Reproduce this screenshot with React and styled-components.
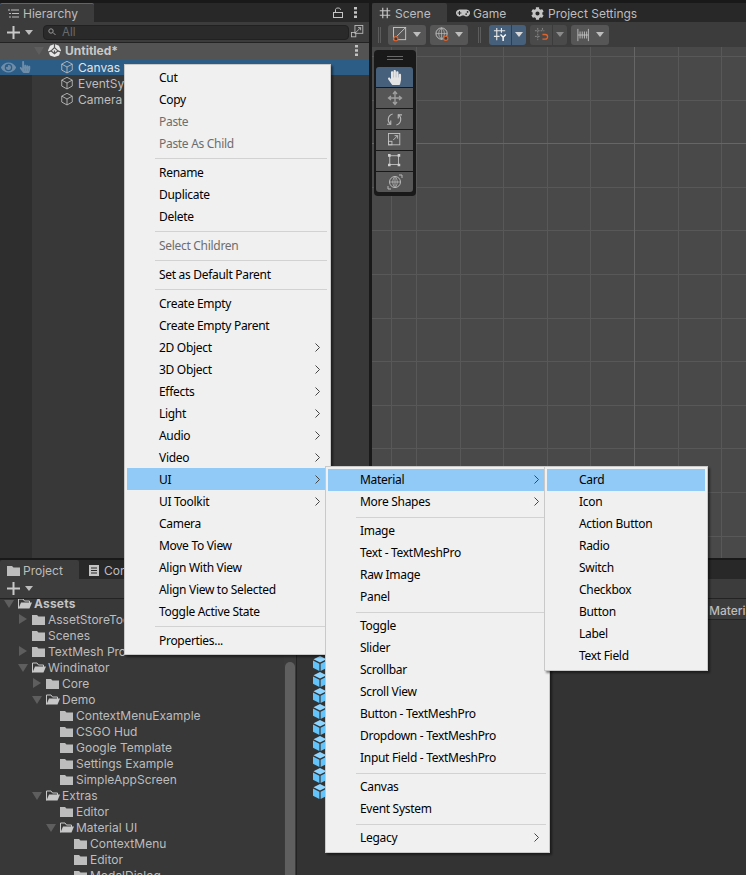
import React from "react";
import styled, { createGlobalStyle } from "styled-components";
import { FaCog, FaGamepad, FaHandPaper, FaHandPointer, FaEye } from "react-icons/fa";

const Global = createGlobalStyle`
  html, body { margin: 0; padding: 0; background: #191919; }
  * { box-sizing: border-box; }
  body { font-family: Inter, "Liberation Sans", sans-serif; font-size: 12px; }
`;

const Page = styled.div`
  position: relative; width: 746px; height: 875px; overflow: hidden;
  background: #191919; display: flex; flex-direction: column;
  color: #bdbdbd; font-family: Inter, "Liberation Sans", sans-serif; font-size: 12px;
`;
const Upper = styled.div`display: flex; height: 558px; padding-top: 3px; gap: 3px;`;
const Lower = styled.div`flex: 1; margin-top: 2px; display: flex; flex-direction: column; min-height: 0;`;
const Panel = styled.section`display: flex; flex-direction: column; min-width: 0; ${p => p.$w ? `width:${p.$w}px;` : "flex:1;"}`;
const TabBar = styled.div`display: flex; height: 19px; background: #282828; align-items: stretch; flex: none;`;
const Tab = styled.div`
  display: flex; align-items: center; gap: ${p => p.$gap ?? 5}px;
  width: ${p => p.$w}px; padding-left: ${p => p.$pl ?? 8}px; padding-top: 1px; flex: none; white-space: nowrap;
  background: ${p => p.$active ? "#3c3c3c" : "transparent"};
  border-top: ${p => p.$blue ? "1px solid #3d6d9e" : "none"};
  border-radius: 2px 2px 0 0;
`;
const TabTools = styled.div`margin-left: auto; display: flex; align-items: center; gap: 11px; padding-right: 12px;`;
const Toolbar = styled.div`
  height: ${p => p.$h}px; flex: none; display: flex; align-items: center; background: #3c3c3c;
  border-bottom: 1px solid #232323; padding-left: 7px;
`;
const PlusDrop = styled.div`display: flex; align-items: center; gap: 5px; width: 36px; flex: none;`;
const Search = styled.div`
  width: 306px; height: 15px; border-radius: 4px; background: #2a2a2a; border: 1px solid #212121;
  display: flex; align-items: center; gap: 5px; padding-left: 4px; color: #6a6a6a; font-size: 11.5px;
`;
const SearchBtn = styled.div`margin-left: 2px; width: 14px; height: 14px; display: flex;`;
const HierList = styled.div`
  flex: 1; background: linear-gradient(to right, #2e2e2e 32px, #383838 32px);
`;
const SceneHeader = styled.div`
  height: 16px; background: #535353; display: flex; align-items: center; padding: 0 0 1px 34px;
  gap: 4px; font-weight: 700; color: #c8c8c8;
`;
const HeaderDots = styled.div`margin-left: auto; margin-right: 11px; display: flex;`;
const HierRow = styled.div`
  height: 16px; display: flex; align-items: center; color: ${p => p.$sel ? "#e4e4e4" : "#bdbdbd"};
  background: ${p => p.$sel ? "#2c5d87" : "transparent"};
`;
const Gutter = styled.div`width: 60px; flex: none; display: flex; align-items: center; padding-left: 1px; gap: 3px;`;
const RowLabel = styled.span`margin-left: 4px;`;

const SceneBar = styled.div`height: 25px; flex: none; background: #3c3c3c; display: flex; align-items: center; padding-left: 6px; gap: 4px;`;
const Grip = styled.div`width: 3px; height: 16px; flex: none; border-left: 1px solid #5c5c5c; border-right: 1px solid #5c5c5c; margin-right: ${p => p.$mr ?? 6}px;`;
const ToolBtn = styled.div`
  height: 20px; width: ${p => p.$w}px; flex: none; display: flex; align-items: center; justify-content: center;
  background: ${p => p.$on ? "#46607c" : p.$dim ? "#4a4a4a" : "#565656"};
  border-radius: ${p => p.$side === "l" ? "3px 0 0 3px" : p.$side === "r" ? "0 3px 3px 0" : "3px"};
  margin-right: ${p => p.$mr ?? 0}px; gap: 5px;
`;
const SceneView = styled.div`
  flex: 1; position: relative; background-color: #494949;
  background-image:
    linear-gradient(#666666, #666666), linear-gradient(#666666, #666666),
    repeating-linear-gradient(to right, #585858 0 1px, transparent 1px 43.6px),
    repeating-linear-gradient(to bottom, #585858 0 1px, transparent 1px 43.6px);
  background-size: 1px 100%, 100% 1px, 100% 100%, 100% 100%;
  background-position: 262px 0, 0 96px, 44px 0, 0 9px;
  background-repeat: no-repeat, no-repeat, repeat, repeat;
`;
const Palette = styled.div`
  position: absolute; left: 2px; top: 3px; width: 42px; height: 146px; background: #191919; border-radius: 4px;
  padding: 6px 2px 0 2px; display: flex; flex-direction: column; gap: 1px;
`;
const PaletteGrip = styled.div`height: 4px; width: 16px; margin: 0 auto 6px; border-top: 1px solid #6a6a6a; border-bottom: 1px solid #6a6a6a; flex:none;`;
const PaletteBtn = styled.div`
  height: 20px; flex: none; width: 37px; display: flex; align-items: center; justify-content: center;
  background: ${p => p.$on ? "#46607c" : "#565656"};
  border-radius: ${p => p.$on ? "3px 3px 0 0" : p.$last ? "0 0 3px 3px" : "0"};
`;

const ProjectTabs = styled(TabBar)`height: 19px;`;
const LowerBody = styled.div`flex: 1; display: flex; min-height: 0;`;
const Tree = styled.div`width: 296px; flex: none; background: #383838; display: flex; overflow: hidden;`;
const TreeList = styled.div`flex: 1; min-width: 0; margin-top: -4px;`;
const TreeRow = styled.div`
  height: 16px; display: flex; align-items: center; padding-left: ${p => 3 + p.$level * 14}px;
  font-weight: ${p => p.$bold ? 700 : 400}; color: ${p => p.$bold ? "#c4c4c4" : "#bdbdbd"}; white-space: nowrap;
  letter-spacing: ${p => p.$bold ? "0.2px" : "0"};
`;
const Arrow = styled.span`width: 15px; flex: none; display: flex; padding-left: 1px;`;
const FolderBox = styled.span`width: 16px; flex: none; display: flex;`;
const ScrollTrack = styled.div`width: 12px; flex: none; padding: 63px 1px 0; background: #3a3a3a;`;
const ScrollThumb = styled.div`height: 400px; background: #5f5f5f; border-radius: 5px;`;
const Assets = styled.div`flex: 1; background: #333333; border-left: 1px solid #232323; min-width: 0;`;
const Breadcrumb = styled.div`
  height: 21px; background: #3c3c3c; border-bottom: 1px solid #232323; display: flex; align-items: center;
  padding: 2px 0 0 412px; white-space: nowrap; overflow: hidden; font-weight: 500;
`;
const CubeColumn = styled.div`padding: 36px 0 0 16px; display: flex; flex-direction: column;`;
const CubeCell = styled.div`height: 16px; display: flex;`;

const Menu = styled.div`
  position: absolute; left: ${p => p.$x}px; top: ${p => p.$y}px; width: ${p => p.$w}px;
  background: #f0f0f0; border: 1px solid #c9c9c9; padding: ${p => p.$pad ?? 1}px 2px 3px;
  box-shadow: 2px 2px 2px rgba(0,0,0,.45);
  color: #000; font-family: "Noto Sans", "Liberation Sans", sans-serif; font-size: 12px;
`;
const Item = styled.div`
  height: 22px; display: flex; align-items: center; padding: 0 8px ${p => p.$lift ? 2 : 0}px 32px;
  white-space: nowrap; letter-spacing: -0.3px; justify-content: space-between;
  color: ${p => p.$off ? "#6d6d6d" : "#000"};
  background: ${p => p.$hot ? "#91c9f7" : "transparent"};
`;
const Sep = styled.div`height: 7px; display: flex; align-items: center; padding: 1px 1px 0 28px; &::after { content: ""; flex: 1; height: 1px; background: #d2d2d2; }`;

const Svg = ({ s = 16, h, vb = "0 0 16 16", children, ...r }) => <svg width={s} height={h ?? s} viewBox={vb} fill="none" style={{ flex: "none", display: "block" }} {...r}>{children}</svg>;

const Cube = () => <Svg s={14} stroke="#bdbdbd" strokeWidth="1"><path d="M8 1.5 14 4.7v6.8L8 14.8 2 11.5V4.7zM2 4.7 8 8l6-3.3M8 8v6.8" /></Svg>;
const BlueCube = () => <Svg s={14} h={15} vb="0 0 14 15"><path d="M7 0 13.5 3.3 7 6.6 .5 3.3z" fill="#8ed6ff" /><path d="M0 4.4 6.4 7.7V15L0 11.7z" fill="#63c4fb" /><path d="M14 4.4 7.6 7.7V15L14 11.7z" fill="#63c4fb" /></Svg>;
const Plus = () => <Svg s={13} vb="0 0 13 13"><path d="M6.5 0v13M0 6.5h13" stroke="#c8c8c8" strokeWidth="2" /></Svg>;
const Caret = ({ c = "#bdbdbd", w = 8 }) => <Svg s={w} h={5} vb="0 0 8 5"><path d="M0 0h8L4 5z" fill={c} /></Svg>;
const TriDown = () => <Svg s={10} h={9} vb="0 0 10 9"><path d="M0 1h10L5 9z" fill="#5e5e5e" /></Svg>;
const TriRight = () => <Svg s={9} h={10} vb="0 0 9 10"><path d="M1 0l8 5-8 5z" fill="#5e5e5e" /></Svg>;
const Folder = () => <Svg s={13} h={11} vb="0 0 13 11"><path d="M0 1h5l1.5 1.5H13V11H0z" fill="#bdbdbd" /></Svg>;
const OpenFolder = () => <Svg s={14} h={11} vb="0 0 14 11"><path d="M.5 10.5V1h4.5l1.5 2h5v2" stroke="#c8c8c8" fill="none" /><path d="M.5 10.5 3 4.5h11l-2.5 6z" fill="#c8c8c8" /></Svg>;
const Dots = ({ c = "#c4c4c4" }) => <Svg s={3} h={11} vb="0 0 3 11"><path d="M0 0h3v2.4H0zM0 4.3h3v2.4H0zM0 8.6h3V11H0z" fill={c} /></Svg>;
const ListIcon = () => <Svg s={11} h={9} vb="0 0 11 9"><path d="M3 1h8M4 4.5h7M4 8h7" stroke="#bdbdbd" /><path d="M0 .5h2v1H0zM1 4h2v1H1zM1 7.5h2v1H1z" fill="#bdbdbd" /></Svg>;
const Lock = () => <Svg s={10} h={11} vb="0 0 10 11"><rect x=".5" y="5.5" width="9" height="5" stroke="#c4c4c4" /><path d="M2.5 5.5V2.5C2.5 .5 7.5 .5 7.5 2.5V3" stroke="#c4c4c4" /></Svg>;
const Unity = () => <Svg s={13} vb="0 0 16 16"><path d="M8 0 13.5 2 16 8 13.5 14 8 16 2.500 14 0 8 2.500 2z" fill="#e6e6e6" /><path d="M8 0v4.500M0 10l3.800-1.500M16 10l-3.800-1.500M8 4.500l4.200 4-4.200 3.500-4.200-3.500zM8 8v4" stroke="#535353" strokeWidth="1.5" /></Svg>;
const SearchIcon = () => <Svg s={9} h={8} vb="0 0 9 8"><circle cx="3" cy="3" r="2.2" stroke="#9a9a9a" /><path d="M5 4.500 7.500 7" stroke="#9a9a9a" /></Svg>;
const ExpandIcon = () => <Svg s={14}><rect x="4.500" y=".5" width="9" height="9" stroke="#bdbdbd" /><rect x=".5" y="8.500" width="5" height="5" stroke="#bdbdbd" /><path d="M6 8 11 3M8 3h3v3" stroke="#bdbdbd" /></Svg>;
const GridIcon = ({ c = "#c4c4c4" }) => <Svg s={12}><path d="M5 1v14M11 1v14M1 5h14M1 11h14" stroke={c} strokeWidth="1.6" /></Svg>;
const DocIcon = () => <Svg s={10} h={11} vb="0 0 10 11"><path d="M0 0h10v11H0z" fill="#c4c4c4" /><path d="M2 3h6M2 5.500h6M2 8h6" stroke="#282828" /></Svg>;
const Chevron = () => <Svg s={5} h={9} vb="0 0 5 9"><path d="M.5.5 4.500 4.500.5 8.500" stroke="#444" /></Svg>;

const PivotIcon = () => <Svg s={15}><rect x=".5" y=".5" width="13" height="13" stroke="#c4c4c4" /><path d="M1 13 13 1" stroke="#c4c4c4" /><circle cx="3" cy="12.500" r="2.200" fill="#3c3c3c" stroke="#e0632c" strokeWidth="1.2" /></Svg>;
const GlobeIcon = () => <Svg s={15}><circle cx="7" cy="7" r="6" stroke="#c4c4c4" /><path d="M1 7h12M7 1v12M7 1C3 4 3 10 7 13M7 1c4 3 4 9 0 12" stroke="#c4c4c4" strokeWidth=".7" /><circle cx="11.500" cy="12" r="2.200" fill="#3c3c3c" stroke="#e0632c" strokeWidth="1.2" /></Svg>;
const GridYIcon = () => <Svg s={15}><path d="M4 1v13M9 1v5M1 4h12M1 10h6" stroke="#e6e6e6" strokeWidth="1.2" /><path d="M8 8l2.800 3 2.800-3M10.800 11v4" stroke="#fff" strokeWidth="1.5" /></Svg>;
const SnapIcon = () => <Svg s={15}><path d="M4 1v13M9 1v3M1 4h10M1 10h5" stroke="#8a8a8a" strokeDasharray="2 1" /><path d="M9 8h3a2.500 2.500 0 0 1 0 5H9" stroke="#e0632c" strokeWidth="1.4" /></Svg>;
const BarsIcon = () => <Svg s={14}><path d="M1 1v14M13 1v14M3.500 4v8M6 4v8M8.500 4v8M11 4v8M1 8h12" stroke="#c4c4c4" /></Svg>;

const MoveIcon = () => <Svg s={16} stroke="#a0a0a0" strokeWidth="1.3"><path d="M8 2v12M2 8h12M6 4l2-2.500L10 4M6 12l2 2.500 2-2.500M4 6 1.500 8 4 10M12 6l2.500 2L12 10" /></Svg>;
const RotateIcon = () => <Svg s={15} stroke="#b8b8b8" strokeWidth="1.2"><path d="M6 2.200A6 6 0 0 0 4 13M10 13.800A6 6 0 0 0 12 3" /><path d="M4 9v4H0M12 7V3h4" /></Svg>;
const ScaleIcon = () => <Svg s={14} stroke="#c4c4c4" strokeWidth="1"><rect x=".5" y=".5" width="13" height="13" /><rect x=".5" y="9.500" width="4" height="4" /><path d="M6 8 11 3M7.500 3H11v3.500" /></Svg>;
const RectIcon = () => <Svg s={14}><rect x="2" y="2" width="10" height="10" stroke="#c4c4c4" /><path d="M0 0h3v3H0zM11 0h3v3h-3zM0 11h3v3H0zM11 11h3v3h-3z" fill="#d0d0d0" /></Svg>;
const TransformIcon = () => <Svg s={16} stroke="#b8b8b8"><circle cx="8" cy="8" r="5.500" /><path d="M8 2.500v11M2.500 8h11M8 2.500C5 5 5 11 8 13.500M8 2.500c3 2.500 3 8.500 0 11" strokeWidth=".8" /><path d="M12 1h3v3M1 12v3h3" /></Svg>;

const mainMenu = [
  ["Cut"], ["Copy"], ["Paste", "off"], ["Paste As Child", "off"], 0,
  ["Rename"], ["Duplicate"], ["Delete"], 0,
  ["Select Children", "off"], 0,
  ["Set as Default Parent"], 0,
  ["Create Empty"], ["Create Empty Parent"], ["2D Object", "sub"], ["3D Object", "sub"], ["Effects", "sub"], ["Light", "sub"], ["Audio", "sub"], ["Video", "sub"],
  ["UI", "hot"], ["UI Toolkit", "sub"], ["Camera"], ["Move To View"], ["Align With View"], ["Align View to Selected"], ["Toggle Active State"], 0,
  ["Properties..."],
];
const uiMenu = [
  ["Material", "hot"], ["More Shapes", "sub"], 0,
  ["Image"], ["Text - TextMeshPro"], ["Raw Image"], ["Panel"], 0,
  ["Toggle"], ["Slider"], ["Scrollbar"], ["Scroll View"], ["Button - TextMeshPro"], ["Dropdown - TextMeshPro"], ["Input Field - TextMeshPro"], 0,
  ["Canvas"], ["Event System"], 0,
  ["Legacy", "sub"],
];
const materialMenu = [["Card", "plain-hot"], ["Icon"], ["Action Button"], ["Radio"], ["Switch"], ["Checkbox"], ["Button"], ["Label"], ["Text Field"]];

const MenuList = ({ items, lift }) => items.map((it, i) => it === 0 ? <Sep key={i} /> : (
  <Item key={i} $lift={lift} $off={it[1] === "off"} $hot={it[1] === "hot" || it[1] === "plain-hot"}>
    <span>{it[0]}</span>
    {(it[1] === "sub" || it[1] === "hot") && <Chevron />}
  </Item>
));

const tree = [
  [0, "Assets", "open", true], [1, "AssetStoreTools", "closed"], [1, "Scenes", ""], [1, "TextMesh Pro", "closed"],
  [1, "Windinator", "open"], [2, "Core", "closed"], [2, "Demo", "open"], [3, "ContextMenuExample", ""], [3, "CSGO Hud", ""],
  [3, "Google Template", ""], [3, "Settings Example", ""], [3, "SimpleAppScreen", ""], [2, "Extras", "open"], [3, "Editor", ""],
  [3, "Material UI", "open"], [4, "ContextMenu", ""], [4, "Editor", ""], [4, "ModalDialog", ""],
];

export default function App() {
  return (
    <Page>
      <Global />
      <Upper>
        <Panel $w={369}>
          <TabBar>
            <Tab $w={94} $active $blue $gap={4}><ListIcon />Hierarchy</Tab>
            <TabTools><Lock /><Dots /></TabTools>
          </TabBar>
          <Toolbar $h={21}>
            <PlusDrop><Plus /><Caret /></PlusDrop>
            <Search><SearchIcon />All</Search>
            <SearchBtn><ExpandIcon /></SearchBtn>
          </Toolbar>
          <HierList>
            <SceneHeader><TriDown /><Unity />Untitled*<HeaderDots><Dots /></HeaderDots></SceneHeader>
            <HierRow $sel>
              <Gutter><FaEye size={15} color="#6f8da8" /><FaHandPointer size={12} color="#6f8da8" /></Gutter><Cube /><RowLabel>Canvas</RowLabel>
            </HierRow>
            <HierRow><Gutter /><Cube /><RowLabel>EventSystem</RowLabel></HierRow>
            <HierRow><Gutter /><Cube /><RowLabel>Camera</RowLabel></HierRow>
          </HierList>
        </Panel>
        <Panel>
          <TabBar>
            <Tab $w={75} $active $pl={7} $gap={4}><GridIcon />Scene</Tab>
            <Tab $w={76} $pl={9} $gap={3}><FaGamepad size={14} color="#c4c4c4" />Game</Tab>
            <Tab $w={130} $pl={8} $gap={4}><FaCog size={13} color="#c4c4c4" />Project Settings</Tab>
          </TabBar>
          <SceneBar>
            <Grip $mr={3} />
            <ToolBtn $w={38}><PivotIcon /><Caret /></ToolBtn>
            <ToolBtn $w={38} $mr={6}><GlobeIcon /><Caret /></ToolBtn>
            <Grip $mr={4} />
            <ToolBtn $w={22} $side="l" $on $mr={-3}><GridYIcon /></ToolBtn>
            <ToolBtn $w={14} $side="r" $on><Caret c="#d8d8d8" /></ToolBtn>
            <ToolBtn $w={22} $side="l" $dim $mr={-3}><SnapIcon /></ToolBtn>
            <ToolBtn $w={14} $side="r" $dim><Caret c="#8a8a8a" /></ToolBtn>
            <ToolBtn $w={38}><BarsIcon /><Caret /></ToolBtn>
          </SceneBar>
          <SceneView>
            <Palette>
              <PaletteGrip />
              <PaletteBtn $on><FaHandPaper size={15} color="#e4e4e4" /></PaletteBtn>
              <PaletteBtn><MoveIcon /></PaletteBtn>
              <PaletteBtn><RotateIcon /></PaletteBtn>
              <PaletteBtn><ScaleIcon /></PaletteBtn>
              <PaletteBtn><RectIcon /></PaletteBtn>
              <PaletteBtn $last><TransformIcon /></PaletteBtn>
            </Palette>
          </SceneView>
        </Panel>
      </Upper>
      <Lower>
        <ProjectTabs>
          <Tab $w={79} $active $pl={7} $gap={3}><Folder />Project</Tab>
          <Tab $w={90} $pl={10} $gap={5}><DocIcon />Console</Tab>
        </ProjectTabs>
        <Toolbar $h={20}>
          <PlusDrop><Plus /><Caret /></PlusDrop>
        </Toolbar>
        <LowerBody>
          <Tree>
            <TreeList>
              {tree.map(([level, name, kind, bold], i) => (
                <TreeRow key={i} $level={level} $bold={bold}>
                  <Arrow>{kind === "open" ? <TriDown /> : kind === "closed" ? <TriRight /> : null}</Arrow>
                  <FolderBox>{kind === "open" ? <OpenFolder /> : <Folder />}</FolderBox>
                  {name}
                </TreeRow>
              ))}
            </TreeList>
            <ScrollTrack><ScrollThumb /></ScrollTrack>
          </Tree>
          <Assets>
            <Breadcrumb>Material UI</Breadcrumb>
            <CubeColumn>
              {Array.from({ length: 9 }, (_, i) => <CubeCell key={i}><BlueCube /></CubeCell>)}
            </CubeColumn>
          </Assets>
        </LowerBody>
      </Lower>
      <Menu $x={124} $y={64} $w={207}><MenuList items={mainMenu} /></Menu>
      <Menu $x={325} $y={466} $w={225} $pad={2}><MenuList items={uiMenu} lift /></Menu>
      <Menu $x={544} $y={466} $w={164} $pad={2}><MenuList items={materialMenu} lift /></Menu>
    </Page>
  );
}
